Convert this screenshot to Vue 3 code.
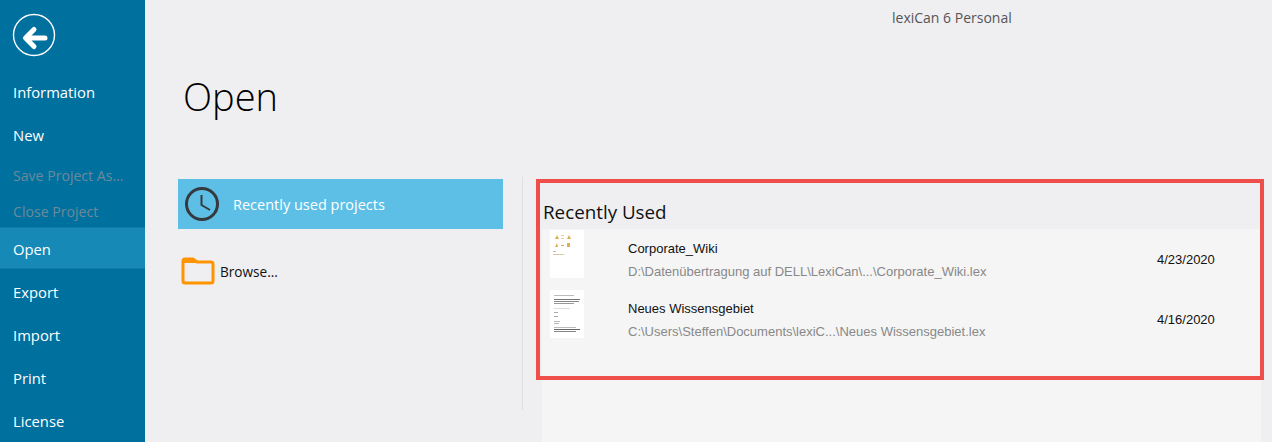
<script setup>
const navItems = [
  { label: 'Information', cls: 'tall' },
  { label: 'New', cls: 'tall' },
  { label: 'Save Project As...', cls: 'save muted' },
  { label: 'Close Project', cls: 'close muted' },
  { label: 'Open', cls: 'active' },
  { label: 'Export', cls: 'tall after' },
  { label: 'Import', cls: 'tall' },
  { label: 'Print', cls: 'tall' },
  { label: 'License', cls: 'tall' }
]

const recent = [
  {
    name: 'Corporate_Wiki',
    path: 'D:\\Datenübertragung auf DELL\\LexiCan\\...\\Corporate_Wiki.lex',
    date: '4/23/2020'
  },
  {
    name: 'Neues Wissensgebiet',
    path: 'C:\\Users\\Steffen\\Documents\\lexiC...\\Neues Wissensgebiet.lex',
    date: '4/16/2020'
  }
]
</script>

<template>
  <div class="app">
    <aside class="sidebar">
      <div class="back">
        <svg width="44" height="44" viewBox="0 0 44 44">
          <circle cx="22" cy="22" r="20.5" fill="none" stroke="#fff" stroke-width="1.4" />
          <path d="M13.5 25 L22 16.5 M13.5 25 L22 33.5 M14 25 H33" fill="none" stroke="#fff" stroke-width="5" stroke-linecap="round" />
        </svg>
      </div>
      <nav>
        <div v-for="item in navItems" :key="item.label" class="nav-item" :class="item.cls">{{ item.label }}</div>
      </nav>
    </aside>

    <main class="main">
      <div class="titlebar">lexiCan 6 Personal</div>
      <h1 class="heading">Open</h1>
      <div class="columns">
        <div class="left">
          <div class="source selected">
            <svg width="36" height="36" viewBox="0 0 36 36">
              <circle cx="18" cy="18" r="15.5" fill="none" stroke="#36393d" stroke-width="3" />
              <path d="M17.5 9 V19 L26 24" fill="none" stroke="#36393d" stroke-width="2" />
            </svg>
            <span>Recently used projects</span>
          </div>
          <div class="source browse">
            <svg width="34" height="28" viewBox="0 0 34 28">
              <path d="M2 4 a2 2 0 0 1 2 -2 H12 L16 5 H30 a2 2 0 0 1 2 2 V24 a2 2 0 0 1 -2 2 H4 a2 2 0 0 1 -2 -2 Z" fill="none" stroke="#ff9300" stroke-width="3" stroke-linejoin="round" />
              <path d="M2 3 H13 L16 6 H2 Z" fill="#ff9300" />
            </svg>
            <span>Browse...</span>
          </div>
        </div>
        <div class="right">
          <h2 class="recent-title">Recently Used</h2>
          <div class="list">
            <div v-for="(file, i) in recent" :key="file.name" class="row">
              <div class="thumb">
                <svg v-if="i === 0" width="34" height="48" viewBox="0 0 34 48">
                  <path d="M5 9 L7 5 L9 9 Z M17 9 L19 5 L21 9 Z" fill="#dcb04a" />
                  <path d="M11 5 h3 v1 h-3 Z M11 8 h3 v1 h-3 Z" fill="#e6cf91" />
                  <path d="M5 17 L7 13 L8 17 Z M11 15 H14 V16 H11 Z M17 13 H20 V17 H17 Z" fill="#dcb04a" />
                  <rect x="3" y="21" width="3" height="1" fill="#bbb" />
                  <rect x="3" y="24" width="11" height="1" fill="#d8c9a0" />
                </svg>
                <svg v-else width="34" height="48" viewBox="0 0 34 48">
                  <rect x="4" y="5" width="20" height="1" fill="#bbb" />
                  <rect x="4" y="9" width="26" height="1" fill="#777" />
                  <rect x="4" y="11" width="25" height="1" fill="#888" />
                  <rect x="4" y="13" width="20" height="1" fill="#999" />
                  <rect x="4" y="18" width="16" height="1" fill="#ddd" />
                  <rect x="4" y="22" width="4" height="1" fill="#aaa" />
                  <rect x="4" y="26" width="4" height="1" fill="#aaa" />
                  <rect x="4" y="31" width="6" height="1" fill="#bbb" />
                  <rect x="4" y="33" width="5" height="1" fill="#bbb" />
                  <rect x="4" y="37" width="22" height="1" fill="#bbb" />
                  <rect x="4" y="39" width="26" height="1" fill="#666" />
                  <rect x="4" y="41" width="22" height="1" fill="#888" />
                </svg>
              </div>
              <div class="info">
                <div class="name">{{ file.name }}</div>
                <div class="path">{{ file.path }}</div>
              </div>
              <div class="date">{{ file.date }}</div>
            </div>
          </div>
        </div>
      </div>
    </main>

    <div class="highlight"></div>
  </div>
</template>

<style>
html, body {
  margin: 0;
  overflow: hidden;
}
</style>

<style scoped>
.app {
  position: relative;
  display: flex;
  width: 1272px;
  height: 442px;
  overflow: hidden;
  background: #efeff2;
  font-family: "Open Sans", "Noto Sans", sans-serif;
}

.sidebar {
  flex: 0 0 145px;
  background: #00709f;
  color: #fff;
}

.back {
  height: 70px;
  padding: 13px 0 0 12px;
  box-sizing: border-box;
}

.back svg {
  display: block;
}

.nav-item {
  display: flex;
  align-items: center;
  padding-left: 13px;
  font-size: 14.8px;
  box-sizing: border-box;
}

.tall {
  height: 43px;
}

.after {
  margin-top: 1px;
}

.save {
  height: 39px;
}

.close {
  height: 32px;
}

.muted {
  color: #6d8a99;
  font-size: 14.1px;
}

.active {
  height: 42px;
  padding-top: 2px;
  background: #1689b7;
  border-top: 1px solid #0e7ca8;
  border-bottom: 1px solid #0e7ca8;
}

.main {
  flex: 1;
  min-width: 0;
  display: flex;
  flex-direction: column;
}

.titlebar {
  height: 34px;
  padding: 9px 0 0 747px;
  box-sizing: border-box;
  font-size: 14px;
  line-height: 18px;
  color: #555;
  white-space: nowrap;
}

.heading {
  margin: 0;
  height: 143px;
  padding: 36px 0 0 38px;
  box-sizing: border-box;
  font-size: 38px;
  line-height: 52px;
  font-weight: 300;
  color: #000;
}

.columns {
  flex: 1;
  display: flex;
  min-height: 0;
}

.left {
  flex: 0 0 345px;
  margin-left: 33px;
  padding: 2px 19px 0 0;
  box-sizing: border-box;
  border-right: 1px solid #dfdfe2;
  height: 233px;
}

.source {
  display: flex;
  align-items: center;
  width: 325px;
  box-sizing: border-box;
  font-size: 14.5px;
}

.selected {
  height: 50px;
  padding-left: 6px;
  background: #5dbfe6;
  color: #fff;
  gap: 13px;
}

.browse {
  margin-top: 28px;
  padding-left: 3px;
  font-size: 13.6px;
  color: #111;
  gap: 5px;
}

.right {
  flex: 1;
  margin-left: 19px;
  margin-right: 11px;
  display: flex;
  flex-direction: column;
}

.recent-title {
  margin: 0;
  height: 52px;
  padding: 22px 0 0 1px;
  box-sizing: border-box;
  font-size: 18.8px;
  line-height: 26px;
  font-weight: 400;
  color: #111;
}

.list {
  flex: 1;
  background: #f5f5f5;
  padding: 1px 0 0 8px;
}

.row {
  display: flex;
  align-items: flex-start;
  height: 60px;
}

.thumb {
  flex: 0 0 34px;
  height: 48px;
  background: #fff;
}

.thumb svg {
  display: block;
  filter: blur(0.3px);
}

.info {
  margin-left: 44px;
  width: 529px;
  font-family: "Liberation Sans", Arial, sans-serif;
  font-size: 13px;
  line-height: 15px;
}

.name {
  margin-top: 11px;
  color: #111;
}

.path {
  margin-top: 8px;
  color: #888;
  white-space: nowrap;
}

.date {
  margin-top: 22px;
  font-family: "Liberation Sans", Arial, sans-serif;
  font-size: 13px;
  line-height: 15px;
  color: #111;
}

.highlight {
  position: absolute;
  left: 536px;
  top: 179px;
  width: 728px;
  height: 201px;
  box-sizing: border-box;
  border: 4px solid #ee4f4b;
}
</style>
